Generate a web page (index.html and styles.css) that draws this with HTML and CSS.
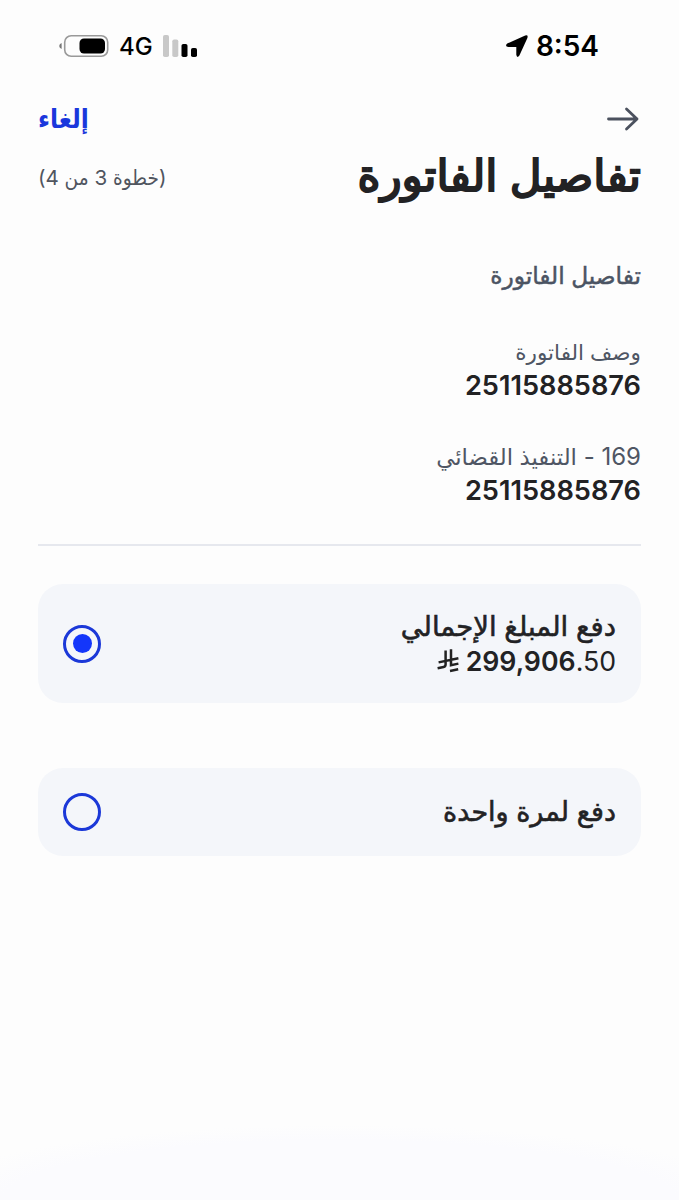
FILE: index.html
```
<!DOCTYPE html>
<html lang="ar" dir="rtl">
<head>
    <meta charset="UTF-8">
    <meta name="viewport" content="width=device-width, initial-scale=1.0">
    <title>تفاصيل الفاتورة</title>
    <link rel="stylesheet" href="styles.css">
</head>
<body>
    <div class="status-bar">
        <div class="status-time">
            <span class="clock">8:54</span>
            <svg class="location" width="24" height="24" viewBox="0 0 24 24">
                <path d="M2.2 9.6 L20.2 1.6 Q23.4 .6 22.4 3.9 L14.4 21.6 Q12 24.6 11.3 20.8 V13 H3.4 Q-.6 12.2 2.2 9.6Z" fill="#000"/>
            </svg>
        </div>
        <div class="status-icons">
            <svg width="36" height="22" viewBox="0 0 36 22">
                <rect x="0" y="0" width="6" height="22" rx="1.8" fill="#c8c8c8"/>
                <rect x="9.3" y="4.5" width="6" height="17.5" rx="1.8" fill="#c8c8c8"/>
                <rect x="18.5" y="9" width="6" height="13" rx="1.8" fill="#000"/>
                <rect x="28" y="13" width="6" height="9" rx="1.8" fill="#000"/>
            </svg>
            <span class="network">4G</span>
            <svg width="50" height="24" viewBox="0 0 50 24">
                <path d="M2.6 9 Q.2 10 .2 12 T2.6 15Z" fill="#777"/>
                <rect x="5.7" y="1.7" width="43" height="20.6" rx="6.5" fill="none" stroke="#999" stroke-width="1.6"/>
                <rect x="20.5" y="4.5" width="25.5" height="15" rx="4.5" fill="#000"/>
            </svg>
        </div>
    </div>

    <div class="container">
        <div class="nav">
            <svg width="34" height="26" viewBox="0 0 34 26">
                <path d="M1.5 13 H30 M19.5 3 L30 13 L19.5 23" fill="none" stroke="#4b515e" stroke-width="2.8" stroke-linecap="round" stroke-linejoin="round"/>
            </svg>
            <a class="cancel">إلغاء</a>
        </div>
        <div class="heading">
            <h1>تفاصيل الفاتورة</h1>
            <span class="step">(خطوة 3 من 4)</span>
        </div>
        <h2>تفاصيل الفاتورة</h2>

        <div class="field">
            <div class="label">وصف الفاتورة</div>
            <div class="value">25115885876</div>
        </div>
        <div class="field">
            <div class="label label-service"><span class="code">169 - </span>التنفيذ القضائي</div>
            <div class="value">25115885876</div>
        </div>
        <hr>

        <div class="option option-total">
            <div>
                <div class="option-title">دفع المبلغ الإجمالي</div>
                <div class="amount" dir="ltr">
                    <svg width="22" height="24" viewBox="0 0 22 24">
                        <path d="M8.6 1.5 V15.6 Q8.6 17.6 6.6 18 L.6 19.3 M14 .2 V16.2 L21.4 14.6 M1.6 13.4 L21.4 9.2 M13 22 L21.2 20.2" fill="none" stroke="#222" stroke-width="2.5"/>
                    </svg>
                    <span><b>299,906</b>.50</span>
                </div>
            </div>
            <span class="radio checked"></span>
        </div>
        <div class="option option-once">
            <div class="option-title">دفع لمرة واحدة</div>
            <span class="radio"></span>
        </div>
    </div>
</body>
</html>
```

FILE: styles.css
```
* {
    box-sizing: border-box;
}
body {
    margin: 0;
    min-height: 1200px;
    background: #fdfdfd radial-gradient(ellipse 420px 75px at 50% 100%, #fbfbfe 80%, #fdfdfd 100%);
    color: #222224;
    font-family: Inter, "DejaVu Sans", sans-serif;
}
.status-bar {
    display: flex;
    justify-content: space-between;
    align-items: center;
    height: 92px;
    padding: 0 80px 0 59px;
    color: #000;
}
.status-time, .status-icons {
    display: flex;
    align-items: center;
}
.status-time {
    gap: 7px;
}
.status-icons {
    gap: 10px;
}
.clock {
    font-size: 28px;
    font-weight: 600;
}
.network {
    font-size: 24px;
    font-weight: 500;
}
.container {
    padding: 0 38px;
}
.nav {
    display: flex;
    justify-content: space-between;
    align-items: center;
    height: 54px;
}
.cancel {
    color: #1a37dc;
    font-family: "DejaVu Sans Condensed", "DejaVu Sans", sans-serif;
    font-size: 26px;
    font-weight: bold;
    line-height: 30px;
}
.heading {
    display: flex;
    justify-content: space-between;
    align-items: center;
    height: 62px;
}
h1 {
    margin: 0 0 3px;
    font-size: 43.8px;
    font-weight: 400;
    line-height: 57px;
    -webkit-text-stroke: 2px #222224;
}
.step {
    color: #50555f;
    font-family: Inter, "DejaVu Sans Condensed", "DejaVu Sans", sans-serif;
    font-size: 20.6px;
}
h2 {
    margin: 50px 0 41px;
    color: #4b5463;
    font-size: 23.3px;
    font-weight: 400;
    line-height: 36px;
    -webkit-text-stroke: 0.5px #4b5463;
}
.field {
    height: 69px;
    margin-bottom: 35px;
}
.label {
    height: 34px;
    color: #4f5664;
    font-size: 21.5px;
    line-height: 34px;
}
.label-service {
    height: 35px;
    font-size: 22.8px;
    line-height: 36px;
}
.code {
    font-size: 24px;
}
.value {
    font-size: 27.2px;
    font-weight: 600;
    line-height: 34px;
}
hr {
    height: 2px;
    margin: 36px 0 38px;
    border: none;
    background-color: #e6e8ee;
}
.option {
    display: flex;
    justify-content: space-between;
    align-items: center;
    padding: 0 25px;
    border-radius: 25px;
    background-color: #f4f6fa;
}
.option-total {
    height: 119px;
    margin-bottom: 65px;
}
.option-once {
    height: 88px;
}
.option-title {
    font-size: 27px;
    font-weight: 400;
    line-height: 34px;
    -webkit-text-stroke: 0.6px #222224;
}
.option-total .option-title {
    font-size: 27.5px;
}
.amount {
    display: flex;
    justify-content: flex-end;
    align-items: center;
    gap: 7px;
    padding-top: 1px;
    font-size: 26.7px;
    line-height: 34px;
}
.amount b {
    font-weight: 600;
}
.radio {
    display: flex;
    justify-content: center;
    align-items: center;
    width: 38px;
    height: 38px;
    border: 3px solid #1b38d8;
    border-radius: 50%;
}
.checked::after {
    content: "";
    width: 19px;
    height: 19px;
    border-radius: 50%;
    background-color: #1436fa;
}
```
